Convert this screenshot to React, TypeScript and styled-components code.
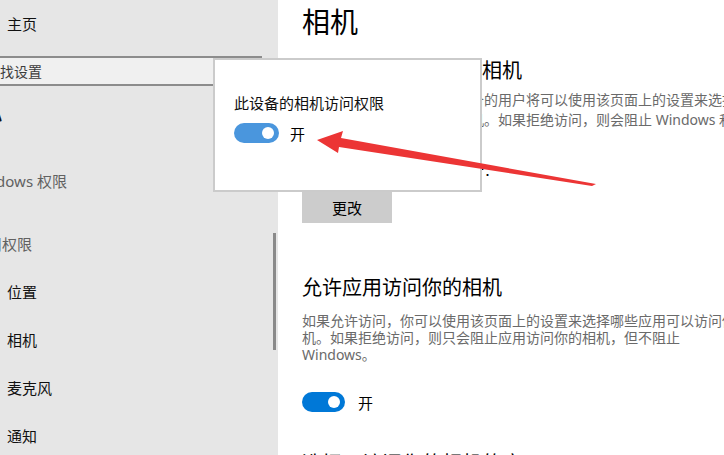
import React from 'react';
import styled, { createGlobalStyle } from 'styled-components';

const GlobalStyle = createGlobalStyle`
  html, body {
    margin: 0;
    padding: 0;
    background: #ffffff;
  }
  body {
    font-family: "Noto Sans", "Noto Sans CJK SC", sans-serif;
    color: #000;
  }
`;

const Page = styled.div`
  position: relative;
  display: flex;
  width: 724px;
  height: 455px;
  overflow: hidden;
  background: #fff;
`;

// 왼쪽 사이드바
const Sidebar = styled.div`
  position: relative;
  width: 278px;
  flex-shrink: 0;
  display: flex;
  flex-direction: column;
  background: #e6e6e6;
  overflow: hidden;
  & > * {
    flex-shrink: 0;
  }
`;

const NavItem = styled.div<{ $h?: number }>`
  height: ${(p) => p.$h || 48}px;
  display: flex;
  align-items: center;
  padding-left: 7px;
  font-size: 15px;
  color: #111;
  white-space: nowrap;
`;

const SearchBox = styled.div`
  margin-top: 10px;
  margin-left: -22px;
  width: 284px;
  height: 30px;
  box-sizing: border-box;
  border: 2px solid #8c8c8c;
  background: #f0f0f0;
  display: flex;
  align-items: center;
  padding-left: 6px;
  font-size: 14px;
  color: #3c3c3c;
  white-space: nowrap;
`;

const GroupLabel = styled.div<{ $top: number; $indent: number; $bold?: boolean }>`
  margin-top: ${(p) => p.$top}px;
  margin-left: ${(p) => p.$indent}px;
  height: ${(p) => (p.$bold ? 34 : 40)}px;
  display: flex;
  align-items: center;
  font-size: 15px;
  font-weight: ${(p) => (p.$bold ? 700 : 400)};
  color: ${(p) => (p.$bold ? '#111' : '#616161')};
  white-space: nowrap;
`;

const ScrollThumb = styled.div`
  position: absolute;
  left: 273px;
  top: 233px;
  width: 3px;
  height: 117px;
  background: #8a8a8a;
`;

// 오른쪽 본문
const Content = styled.div`
  flex: 1;
  display: flex;
  flex-direction: column;
  padding-left: 24px;
  overflow: hidden;
  & > * {
    flex-shrink: 0;
  }
`;

const PageTitle = styled.div`
  margin-top: 2px;
  height: 40px;
  line-height: 40px;
  font-size: 28px;
  color: #000;
  white-space: nowrap;
`;

const SectionTitle = styled.div<{ $top: number }>`
  margin-top: ${(p) => p.$top}px;
  height: 28px;
  line-height: 28px;
  font-size: 20px;
  color: #000;
  white-space: nowrap;
`;

const Desc = styled.div<{ $top: number; $lh: number }>`
  margin-top: ${(p) => p.$top}px;
  font-size: 14px;
  line-height: ${(p) => p.$lh}px;
  color: #6a6a6a;
  white-space: nowrap;
  span {
    display: block;
  }
`;

const Status = styled.div`
  margin-top: 30px;
  height: 20px;
  font-size: 14px;
  line-height: 20px;
  color: #000;
  white-space: nowrap;
`;

const Button = styled.div`
  margin-top: 12px;
  width: 90px;
  height: 31px;
  display: flex;
  align-items: center;
  justify-content: center;
  background: #cccccc;
  font-size: 15px;
  color: #000;
`;

const ToggleRow = styled.div<{ $top?: number; $gap: number }>`
  margin-top: ${(p) => p.$top || 0}px;
  display: flex;
  align-items: center;
  gap: ${(p) => p.$gap}px;
  height: 20px;
  font-size: 15px;
  color: #000;
  flex-shrink: 0;
`;

const Toggle = styled.div<{ $color: string; $w: number }>`
  position: relative;
  width: ${(p) => p.$w}px;
  height: 20px;
  border-radius: 10px;
  background: ${(p) => p.$color};
  &::after {
    content: '';
    position: absolute;
    right: 5px;
    top: 4px;
    width: 12px;
    height: 12px;
    border-radius: 50%;
    background: #fff;
  }
`;

// 팝업 (겹쳐 보이는 부분)
const Popup = styled.div`
  position: absolute;
  left: 213px;
  top: 58px;
  width: 269px;
  height: 134px;
  box-sizing: border-box;
  border: 2px solid #cbcbcb;
  background: #fff;
  padding: 33px 0 0 19px;
  display: flex;
  flex-direction: column;
`;

const PopupLabel = styled.div`
  font-size: 15px;
  line-height: 20px;
  color: #111;
  white-space: nowrap;
`;

const ArrowLayer = styled.svg`
  position: absolute;
  left: 0;
  top: 0;
  pointer-events: none;
`;

const App = () => {
  return (
    <Page>
      <GlobalStyle />
      <Sidebar>
        <NavItem $h={46}>主页</NavItem>
        <SearchBox>查找设置</SearchBox>
        <GroupLabel $top={10} $indent={-28} $bold>隐私</GroupLabel>
        <GroupLabel $top={30} $indent={-31}>Windows 权限</GroupLabel>
        <GroupLabel $top={23} $indent={-28}>应用权限</GroupLabel>
        <NavItem style={{ marginTop: 4 }}>位置</NavItem>
        <NavItem>相机</NavItem>
        <NavItem>麦克风</NavItem>
        <NavItem>通知</NavItem>
        <ScrollThumb />
      </Sidebar>

      <Content>
        <PageTitle>相机</PageTitle>
        <SectionTitle $top={15}>允许访问此设备上的相机</SectionTitle>
        <Desc $top={5} $lh={20}>
          <span>如果允许访问，则使用此设备的用户将可以使用该页面上的设置来选择其应用</span>
          <span>是否可以访问此设备上的相机。如果拒绝访问，则会阻止 Windows 和应用访问相机。</span>
        </Desc>
        <Status>此设备的相机访问权限已打开：</Status>
        <Button>更改</Button>

        <SectionTitle $top={51}>允许应用访问你的相机</SectionTitle>
        <Desc $top={10} $lh={17}>
          <span>如果允许访问，你可以使用该页面上的设置来选择哪些应用可以访问你的相</span>
          <span>机。如果拒绝访问，则只会阻止应用访问你的相机，但不阻止</span>
          <span>Windows。</span>
        </Desc>
        <ToggleRow $top={29} $gap={13}>
          <Toggle $color="#0078d7" $w={43} />
          开
        </ToggleRow>
        <SectionTitle $top={38}>选择可访问你的相机的应用</SectionTitle>
      </Content>

      <Popup>
        <PopupLabel>此设备的相机访问权限</PopupLabel>
        <ToggleRow $top={10} $gap={11}>
          <Toggle $color="#4a96dd" $w={45} />
          开
        </ToggleRow>
      </Popup>

      <ArrowLayer width={724} height={455} viewBox="0 0 724 455">
        <path
          d="M317 140 L343 131 L341 138 L596 184 L592 186 L339 147 L338 153 Z"
          fill="#ec3535"
        />
      </ArrowLayer>
    </Page>
  );
};

export default App;
